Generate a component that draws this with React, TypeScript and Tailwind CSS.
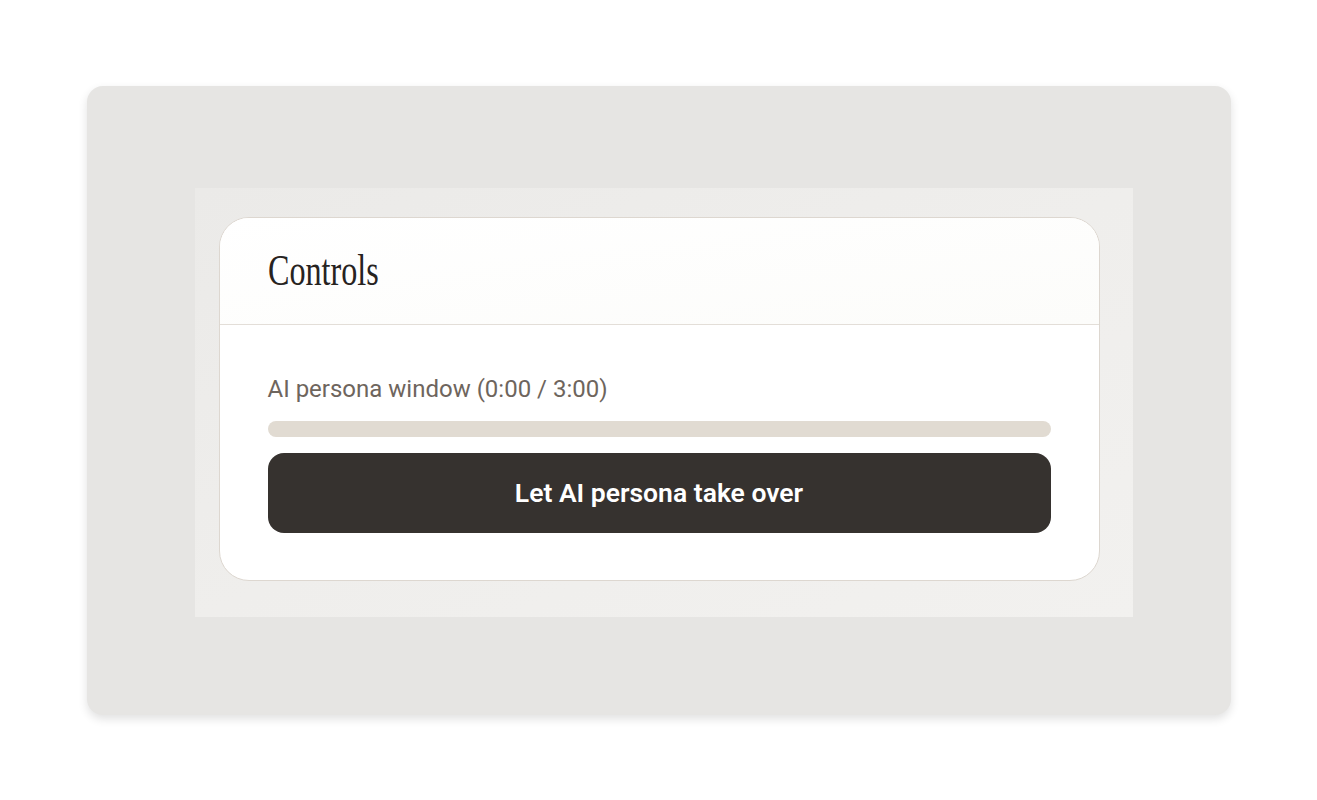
export default function App() {
  return (
    <div className="min-h-[800px] w-full bg-white pt-[86px]">
      <div className="mx-auto h-[629px] w-[1144px] rounded-[16px] bg-[#e6e5e3] pl-[108px] pt-[102px] shadow-[0_4px_10px_rgba(0,0,0,0.12)]">
        <div className="h-[429px] w-[938px] bg-gradient-to-br from-[#ebeae8] via-[#efeeec] to-[#f2f1ef] pl-6 pt-[29px]">
          <section className="w-[881px] overflow-hidden rounded-[30px] border border-[#ddd7d0] bg-white">
            <header className="flex h-[107px] items-center border-b border-[#e3ded8] bg-gradient-to-br from-white to-[#fcfcfa] px-12">
              <h2
                className="origin-left scale-x-[0.73] text-[44px] leading-none text-[#27231f]"
                style={{ fontFamily: '"Liberation Serif", "DejaVu Serif", serif' }}
              >
                Controls
              </h2>
            </header>
            <div
              className="px-12 pb-[47px] pt-[48px]"
              style={{ fontFamily: 'Roboto, "Liberation Sans", sans-serif' }}
            >
              <p className="text-[24px] leading-8 text-[#6e655d]">AI persona window (0:00 / 3:00)</p>
              <div className="mt-4 h-4 w-full rounded-full bg-[#e1dbd2]" />
              <button className="mt-4 flex h-20 w-full items-center justify-center rounded-2xl bg-[#36322f] text-[26.5px] font-semibold text-white">
                Let AI persona take over
              </button>
            </div>
          </section>
        </div>
      </div>
    </div>
  );
}
